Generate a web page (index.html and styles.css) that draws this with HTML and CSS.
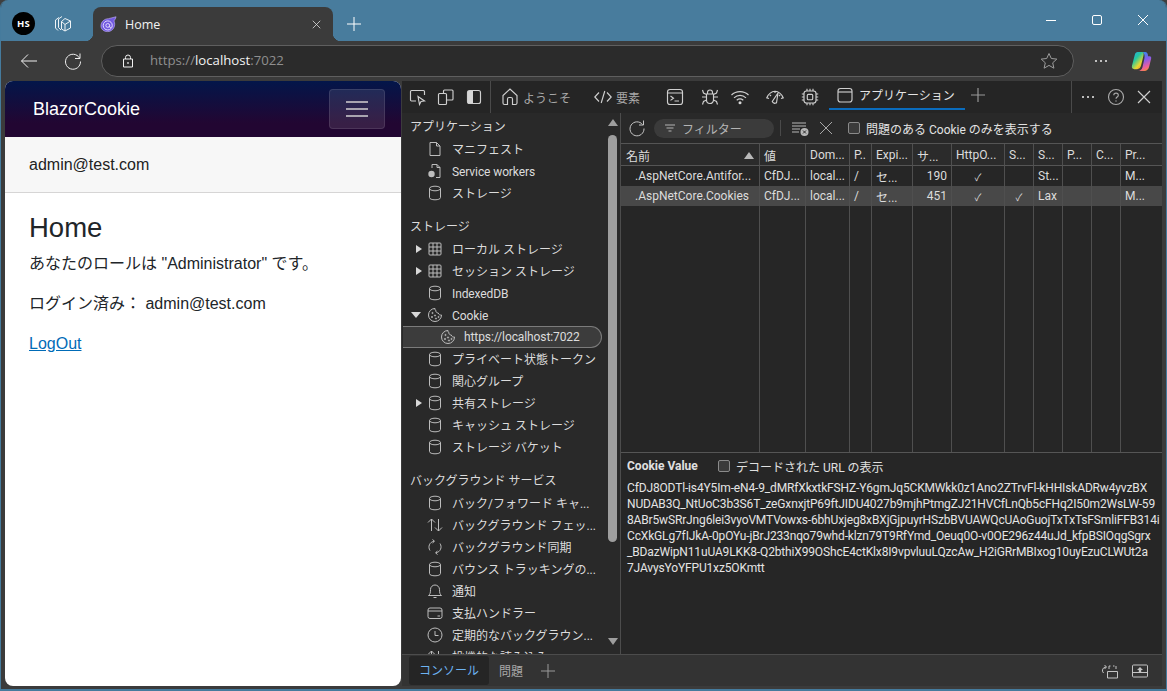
FILE: index.html
```html
<!DOCTYPE html>
<html lang="ja">
<head>
<meta charset="utf-8">
<title>Home</title>
<link rel="stylesheet" href="styles.css">
</head>
<body>
<svg class="defs" aria-hidden="true">
  <symbol id="db" viewBox="0 0 16 16"><ellipse cx="8" cy="3.5" rx="5.5" ry="2.3"/><path d="M2.500 3.500V12.500C2.500 14 5 14.800 8 14.800S13.500 14 13.500 12.500V3.500"/></symbol>
  <symbol id="file" viewBox="0 0 16 16"><path d="M3 1.500H9.500L13 5V14.500H3ZM9.500 1.500V5H13"/></symbol>
  <symbol id="grid" viewBox="0 0 16 16"><rect x="2" y="2" width="12" height="12" rx="1"/><path d="M2 6H14M2 10H14M6 2V14M10 2V14"/></symbol>
  <symbol id="cookie" viewBox="0 0 16 16"><path d="M8 1.500A6.500 6.500 0 1 0 14.500 8C13 8.300 11.500 7.500 11.300 6 9.800 6 8.500 4.800 8.800 3.200 8 3 7.800 2.300 8 1.500Z"/><circle cx="5.500" cy="6" r=".6"/><circle cx="5" cy="10" r=".6"/><circle cx="8" cy="8.500" r=".6"/><circle cx="9" cy="11.500" r=".6"/><circle cx="11.500" cy="10" r=".6"/></symbol>
</svg>
<div class="window">
  <header class="titlebar">
    <div class="avatar">HS</div>
    <svg class="ic18 coll" viewBox="0 0 18 18"><path d="M5 2.500 1.500 5V13L4 15.500M8 1.500 4.500 4V12.500L7 15M7.500 6.500 11 3.500 16.500 6V13L11 16 7.500 14ZM11 16V9.500L16.500 6M11 9.500 7.500 6.500"/></svg>
    <div class="tab">
      <svg class="favicon" viewBox="0 0 18 18"><path class="fav-fill" d="M1 10.500C1 6 4.500 3 9 2.800L17 .8C16.500 3 15.500 4.200 14.800 5.200 17 9.500 14.500 16.500 8 16.500 4 16.500 1 14 1 10.500Z"/><circle class="fav-ring" cx="8.200" cy="10" r="4.800"/><circle class="fav-ring" cx="8.200" cy="10" r="2"/><path class="fav-ring" d="M10.200 10V11.500C10.200 12.500 11.500 12.500 12 11.500"/></svg>
      <span class="tab-title">Home</span>
      <svg class="ic12 tab-x" viewBox="0 0 12 12"><path d="M1 1 11 11M11 1 1 11"/></svg>
    </div>
    <svg class="ic14 newtab" viewBox="0 0 14 14"><path d="M7 0V14M0 7H14"/></svg>
    <div class="winctl">
      <svg class="ic12" viewBox="0 0 12 12"><path d="M1 6.500H11"/></svg>
      <svg class="ic12" viewBox="0 0 12 12"><rect x="1.500" y="1.500" width="9" height="9" rx="1.500"/></svg>
      <svg class="ic12" viewBox="0 0 12 12"><path d="M1 1 11 11M11 1 1 11"/></svg>
    </div>
  </header>
  <div class="toolbar">
    <svg class="ic18 back" viewBox="0 0 18 18"><path d="M17 9H1.500M8 2.500 1.500 9 8 15.500"/></svg>
    <svg class="ic18 reload" viewBox="0 0 18 18"><path d="M15.500 6A7.500 7.500 0 1 0 16.500 9.500M16 1.500V6.500H11"/></svg>
    <div class="urlbar">
      <svg class="ic14 lock" viewBox="0 0 14 14"><path d="M4.500 5V3.500A2.500 2.500 0 0 1 9.500 3.500V5M2.500 5H11.500V13H2.500Z"/><circle class="solid" cx="7" cy="9" r=".9"/></svg>
      <span class="url"><span class="dim">https://</span>localhost<span class="dim">:7022</span></span>
      <svg class="ic18 star" viewBox="0 0 18 18"><path d="M9 1.500 11.300 6.500 16.800 7.100 12.700 10.800 13.900 16.200 9 13.400 4.100 16.200 5.300 10.800 1.200 7.100 6.700 6.500Z"/></svg>
    </div>
    <div class="dots wide"><i></i><i></i><i></i></div>
    <svg class="copilot" viewBox="0 0 22 22">
      <defs>
        <linearGradient id="cp1" x1="0" y1="0" x2="0.800" y2="1"><stop offset="0" stop-color="#2aa6ee"/><stop offset=".4" stop-color="#25c7a0"/><stop offset=".75" stop-color="#e8d72f"/><stop offset="1" stop-color="#f28b30"/></linearGradient>
        <linearGradient id="cp2" x1="0.300" y1="0" x2="0.600" y2="1"><stop offset="0" stop-color="#2f8cf0"/><stop offset=".45" stop-color="#8a5ce8"/><stop offset=".8" stop-color="#ee5f9a"/><stop offset="1" stop-color="#f58a3a"/></linearGradient>
      </defs>
      <path fill="url(#cp2)" d="M12 1H15C16.500 1 17.300 2 17.600 3.500L17.800 5.500H19.500C21 5.500 21.500 6.800 21 8.500L19 16.500C18.500 19 16.500 21 14 21H7.500C10 21 11.500 19 12 17L14 8C14.500 5.500 14.500 2.500 12 1Z"/>
      <path fill="url(#cp1)" d="M7 1H12C13.500 1.500 13.500 3 13 5L10.500 15.500C10 17.500 8.500 19 6.500 19H3.500C1.500 19 .5 17.500 1 15.500L4 4C4.500 2 5.500 1 7 1Z"/>
    </svg>
  </div>
  <main class="content">
    <section class="page">
      <div class="brandbar">
        <a class="brand">BlazorCookie</a>
        <button class="toggler"><i></i><i></i><i></i></button>
      </div>
      <div class="userbar">admin@test.com</div>
      <article class="article">
        <h1>Home</h1>
        <p>あなたのロールは "Administrator" です。</p>
        <p>ログイン済み： admin@test.com</p>
        <p><a class="link">LogOut</a></p>
      </article>
    </section>
    <section class="devtools">
      <div class="dt-tabs">
        <svg class="ic18 b28 first" viewBox="0 0 18 18"><path d="M7 13H2.500A1 1 0 0 1 1.500 12V3.500A1 1 0 0 1 2.500 2.500H14.500A1 1 0 0 1 15.500 3.500V7M9 8.500 10.500 16.500 12 13.500 15.500 13Z"/></svg>
        <svg class="ic18 b28" viewBox="0 0 18 18"><path d="M6.500 5V3A1 1 0 0 1 7.500 2H15A1 1 0 0 1 16 3V11A1 1 0 0 1 15 12H10M2.500 5.500H8.500A1 1 0 0 1 9.500 6.500V15.500A1 1 0 0 1 8.500 16.500H2.500A1 1 0 0 1 1.500 15.500V6.500A1 1 0 0 1 2.500 5.500Z"/></svg>
        <svg class="ic18 dock" viewBox="0 0 18 18"><rect x="2.500" y="2.500" width="13" height="13" rx="2"/><path class="solid" d="M3 3H8V15H3Z"/></svg>
        <span class="vsep"></span>
        <svg class="ic18 home" viewBox="0 0 18 18"><path d="M6.500 16.500H3.500A1.500 1.500 0 0 1 2 15V7.500L9 1 16 7.500V15A1.500 1.500 0 0 1 14.500 16.500H11.500V11A1.500 1.500 0 0 0 10 9.500H8A1.500 1.500 0 0 0 6.500 11Z"/></svg>
        <span class="dt-label welcome">ようこそ</span>
        <svg class="ic18 code" viewBox="0 0 18 18"><path d="M5 4.500 .8 9 5 13.500M13 4.500 17.200 9 13 13.500M10.800 3 7.200 15"/></svg>
        <span class="dt-label elements">要素</span>
        <svg class="ic18 t-console" viewBox="0 0 18 18"><rect x="1.500" y="1.500" width="15" height="15" rx="2.500"/><path d="M1.500 5H16.500M4.500 8 7.500 10.200 4.500 12.400M8.500 13H13"/></svg>
        <svg class="ic18 t-bug" viewBox="0 0 18 18"><path d="M5.500 6H12.500V12A3.500 3.500 0 0 1 5.500 12ZM6.500 6V4.500A2.500 2.500 0 0 1 11.500 4.500V6M5.500 9H1M12.500 9H17M5.500 6.500 2.500 5 1.500 2M12.500 6.500 15.500 5 16.500 2M5.500 12 2.500 13.500 1.500 16.500M12.500 12 15.500 13.500 16.500 16.500"/></svg>
        <svg class="ic18 t-wifi" viewBox="0 0 18 18"><path d="M.5 7C5 2.500 13 2.500 17.500 7M3 9.800C6.500 6.500 11.500 6.500 15 9.800M5.700 12.300C7.800 10.600 10.200 10.600 12.300 12.300"/><circle class="solid" cx="9" cy="14.800" r="1.500"/></svg>
        <svg class="ic18 t-perf" viewBox="0 0 18 18"><path d="M3 10.500 .8 9.800C2.500 6 5.500 3.500 9 3.300 12.500 3.500 15.500 6 17.200 9.800L15 10.500M3.800 6.800 5 8M9 3.300V5M14.200 6.800 13 8M7 14.500 6.300 13.500 12 5 10.500 14.800 8.500 15.300Z"/></svg>
        <svg class="ic18 t-cpu" viewBox="0 0 18 18"><rect x="3" y="3" width="12" height="12" rx="2.500"/><rect x="6.300" y="6.300" width="5.400" height="5.400" rx="1"/><path d="M6 .8V3M9 .8V3M12 .8V3M6 15V17.200M9 15V17.200M12 15V17.200M.8 6H3M.8 9H3M.8 12H3M15 6H17.200M15 9H17.200M15 12H17.200"/></svg>
        <div class="app-tab">
          <svg class="ic16" viewBox="0 0 16 16"><rect x="1" y="1.500" width="14" height="13.500" rx="2.500"/><path d="M1 5H15"/></svg>
          <span>アプリケーション</span>
        </div>
        <svg class="ic14 dt-plus" viewBox="0 0 14 14"><path d="M7 0V14M0 7H14"/></svg>
        <span class="vsep end"></span>
        <div class="dots dt-dots"><i></i><i></i><i></i></div>
        <svg class="ic18 help" viewBox="0 0 18 18"><circle cx="9" cy="9" r="7.500"/><path d="M6.800 7.200C6.800 4.500 11.300 4.500 11.300 7.200 11.300 9 9 9 9 10.800"/><circle class="solid" cx="9" cy="13" r=".7"/></svg>
        <svg class="ic14 dt-close" viewBox="0 0 14 14"><path d="M1 1 13 13M13 1 1 13"/></svg>
      </div>
      <div class="dt-body">
        <aside class="side">
          <nav class="tree">
            <div class="head">アプリケーション</div>
            <div class="row"><span class="car"></span><svg class="ti"><use href="#file"/></svg><span class="txt">マニフェスト</span></div>
            <div class="row small"><span class="car"></span><svg class="ti" viewBox="0 0 16 16"><path d="M5 5V1.500H10L13 4.500V14.500H9M10 1.500V4.500H13"/><circle class="solid" cx="4.500" cy="11" r="3.200"/></svg><span class="txt">Service workers</span></div>
            <div class="row"><span class="car"></span><svg class="ti"><use href="#db"/></svg><span class="txt">ストレージ</span></div>
            <div class="head gap">ストレージ</div>
            <div class="row"><span class="car right"></span><svg class="ti"><use href="#grid"/></svg><span class="txt">ローカル ストレージ</span></div>
            <div class="row"><span class="car right"></span><svg class="ti"><use href="#grid"/></svg><span class="txt">セッション ストレージ</span></div>
            <div class="row small"><span class="car"></span><svg class="ti"><use href="#db"/></svg><span class="txt">IndexedDB</span></div>
            <div class="row small"><span class="car down"></span><svg class="ti"><use href="#cookie"/></svg><span class="txt">Cookie</span></div>
            <div class="row selected small"><svg class="ti"><use href="#cookie"/></svg><span class="txt">https://localhost:7022</span></div>
            <div class="row"><span class="car"></span><svg class="ti"><use href="#db"/></svg><span class="txt">プライベート状態トークン</span></div>
            <div class="row"><span class="car"></span><svg class="ti"><use href="#db"/></svg><span class="txt">関心グループ</span></div>
            <div class="row"><span class="car right"></span><svg class="ti"><use href="#db"/></svg><span class="txt">共有ストレージ</span></div>
            <div class="row"><span class="car"></span><svg class="ti"><use href="#db"/></svg><span class="txt">キャッシュ ストレージ</span></div>
            <div class="row"><span class="car"></span><svg class="ti"><use href="#db"/></svg><span class="txt">ストレージ バケット</span></div>
            <div class="head gap">バックグラウンド サービス</div>
            <div class="row"><span class="car"></span><svg class="ti"><use href="#db"/></svg><span class="txt">バック/フォワード キャ...</span></div>
            <div class="row"><span class="car"></span><svg class="ti" viewBox="0 0 16 16"><path d="M4.500 14V2M1 5.500 4.500 2 8 5.500M11.500 2V14M8 10.500 11.500 14 15 10.500"/></svg><span class="txt">バックグラウンド フェッ...</span></div>
            <div class="row"><span class="car"></span><svg class="ti" viewBox="0 0 16 16"><path d="M3 11.500A6 6 0 0 1 7 2.200M5.500 .5 7.500 2.200 5.500 4M13 4.500A6 6 0 0 1 9 13.800M10.500 12 8.500 13.800 10.500 15.500"/></svg><span class="txt">バックグラウンド同期</span></div>
            <div class="row"><span class="car"></span><svg class="ti"><use href="#db"/></svg><span class="txt">バウンス トラッキングの...</span></div>
            <div class="row"><span class="car"></span><svg class="ti" viewBox="0 0 16 16"><path d="M1.500 12.500C3 11.500 3.500 10 3.500 6.500A4.500 4.500 0 0 1 12.500 6.500C12.500 10 13 11.500 14.500 12.500ZM6.500 14.500H9.500"/></svg><span class="txt">通知</span></div>
            <div class="row"><span class="car"></span><svg class="ti" viewBox="0 0 16 16"><rect x="1" y="3" width="14" height="10.500" rx="2"/><path d="M1 6H15M10.500 11H13"/></svg><span class="txt">支払ハンドラー</span></div>
            <div class="row"><span class="car"></span><svg class="ti" viewBox="0 0 16 16"><circle cx="8" cy="8" r="7"/><path d="M8 4V8.500H11.500"/></svg><span class="txt">定期的なバックグラウン...</span></div>
            <div class="row"><span class="car"></span><svg class="ti" viewBox="0 0 16 16"><path d="M4.500 14V2M1 5.500 4.500 2 8 5.500M11.500 2V14M8 10.500 11.500 14 15 10.500"/></svg><span class="txt">投機的な読み込み</span></div>
          </nav>
          <div class="scroll">
            <span class="arrow up"></span>
            <span class="thumb"></span>
            <span class="arrow dn"></span>
          </div>
        </aside>
        <div class="main">
          <div class="filterbar">
            <svg class="ic16 fb-reload" viewBox="0 0 16 16"><path d="M13.500 4.500A7 7 0 1 0 15 8.500M14.500 .5V5H10"/></svg>
            <div class="pill">
              <svg class="ic12" viewBox="0 0 12 12"><path d="M1 3H11M2.500 6H9.500M4.500 9H7.500"/></svg>
              <span>フィルター</span>
            </div>
            <span class="vsep short"></span>
            <svg class="ic18 fb-clear" viewBox="0 0 18 18"><path d="M1 4H15M1 7H15M1 10H9M1 13H8"/><circle class="solid" cx="13.500" cy="13" r="4"/><path class="cut" d="M12 11.500 15 14.500M15 11.500 12 14.500"/></svg>
            <svg class="ic14 fb-x" viewBox="0 0 14 14"><path d="M1 1 13 13M13 1 1 13"/></svg>
            <span class="check"></span>
            <span class="fb-text">問題のある Cookie のみを表示する</span>
          </div>
          <div class="tablewrap">
            <table class="cookies">
              <colgroup>
                <col class="w138"><col class="w46"><col class="w44"><col class="w22"><col class="w41"><col class="w39"><col class="w53"><col class="w29"><col class="w29"><col class="w29"><col class="w29"><col>
              </colgroup>
              <thead>
                <tr>
                  <th>名前<span class="sort"></span></th><th>値</th><th>Dom...</th><th>P..</th><th>Expi...</th><th>サ...</th><th>HttpO...</th><th>S...</th><th>S...</th><th>P...</th><th>C...</th><th>Pr...</th>
                </tr>
              </thead>
              <tbody>
                <tr>
                  <td class="name">.AspNetCore.Antifor...</td><td>CfDJ...</td><td>local...</td><td>/</td><td>セ...</td><td class="num">190</td><td class="ctr">✓</td><td></td><td>St...</td><td></td><td></td><td>M...</td>
                </tr>
                <tr class="sel">
                  <td class="name">.AspNetCore.Cookies</td><td>CfDJ...</td><td>local...</td><td>/</td><td>セ...</td><td class="num">451</td><td class="ctr">✓</td><td class="ctr">✓</td><td>Lax</td><td></td><td></td><td>M...</td>
                </tr>
                <tr class="filler"><td></td><td></td><td></td><td></td><td></td><td></td><td></td><td></td><td></td><td></td><td></td><td></td></tr>
              </tbody>
            </table>
          </div>
          <div class="valuepane">
            <div class="value-head"><strong>Cookie Value</strong><span class="check"></span><span>デコードされた URL の表示</span></div>
            <div class="value">CfDJ8ODTl-is4Y5Im-eN4-9_dMRfXkxtkFSHZ-Y6gmJq5CKMWkk0z1Ano2ZTrvFl-kHHIskADRw4yvzBX<br>NUDAB3Q_NtUoC3b3S6T_zeGxnxjtP69ftJIDU4027b9mjhPtmgZJ21HVCfLnQb5cFHq2I50m2WsLW-59<br>8ABr5wSRrJng6lei3vyoVMTVowxs-6bhUxjeg8xBXjGjpuyrHSzbBVUAWQcUAoGuojTxTxTsFSmliFFB314i<br>CcXkGLg7fIJkA-0pOYu-jBrJ233nqo79whd-klzn79T9RfYmd_Oeuq0O-v0OE296z44uJd_kfpBSIOqgSgrx<br>_BDazWipN11uUA9LKK8-Q2bthiX99OShcE4ctKlx8I9vpvluuLQzcAw_H2iGRrMBIxog10uyEzuCLWUt2a<br>7JAvysYoYFPU1xz5OKmtt</div>
          </div>
        </div>
      </div>
      <div class="drawer">
        <div class="dr-tab">コンソール</div>
        <div class="dr-label">問題</div>
        <svg class="ic14 dr-plus" viewBox="0 0 14 14"><path d="M7 0V14M0 7H14"/></svg>
        <svg class="ic18 dr-a" viewBox="0 0 18 18"><path d="M2.500 11A3.500 3.500 0 0 1 5 5M3.500 3 5.500 5 3.500 7M6.500 9.500H16.500V16H6.500ZM8 7V4H9.500M12 4H13.500M15 4V7"/></svg>
        <svg class="ic18 dr-b" viewBox="0 0 18 18"><rect x="1.500" y="3" width="15" height="12" rx="1"/><path d="M1.500 10.500H16.500"/><path class="solid" d="M9 5 12 8H10.200V10.500H7.800V8H6Z"/></svg>
      </div>
    </section>
  </main>
</div>
</body>
</html>
```
FILE: styles.css
```css
* { box-sizing: border-box; }
html, body { margin: 0; height: 100%; overflow: hidden; }
body { background: #3f3f3f; font-family: "Roboto", "Noto Sans CJK JP", sans-serif; }
.defs { display: none; }
svg { flex: none; fill: none; stroke: #d6d6d6; stroke-width: 1; overflow: visible; }
svg .solid { fill: #d6d6d6; stroke: none; }
.ic12 { width: 12px; height: 12px; }
.ic14 { width: 14px; height: 14px; }
.ic16 { width: 16px; height: 16px; }
.ic18 { width: 18px; height: 18px; }

.window { height: 691px; display: flex; flex-direction: column; border: solid #457b9d; border-width: 0 1px 2px; border-radius: 8px 8px 0 0; overflow: hidden; background: #3b3b3b; }

.titlebar { height: 41px; flex: none; display: flex; align-items: flex-end; background: #487c9d; color: #fff; }
.avatar { width: 23px; height: 23px; margin: 0 0 6px 11px; border-radius: 50%; background: #000; font: 700 9.5px/23px "Open Sans", sans-serif; text-align: center; letter-spacing: .3px; }
.coll { margin: 0 0 8px 19px; stroke: #eef3f6; }
.tab { width: 240px; height: 34px; margin-left: 21px; display: flex; align-items: center; padding: 0 10px 0 7px; background: #3b3b3b; border-radius: 8px 8px 0 0; position: relative; }
.tab::before, .tab::after { content: ""; position: absolute; bottom: 0; width: 8px; height: 8px; }
.tab::before { left: -8px; background: radial-gradient(circle at 0 0, transparent 8px, #3b3b3b 8.5px); }
.tab::after { right: -8px; background: radial-gradient(circle at 100% 0, transparent 8px, #3b3b3b 8.5px); }
.favicon { width: 17px; height: 17px; stroke: none; }
.fav-fill { fill: #7159e0; stroke: #c9b8ff; stroke-width: .6; }
.fav-ring { stroke: #e8e0ff; stroke-width: 1; fill: none; }
.tab-title { margin-left: 8px; flex: 1; font: 12.5px "Open Sans", sans-serif; color: #f2f2f2; }
.tab-x { stroke: #e8e8e8; width: 9px; height: 9px; margin-right: 2px; }
.newtab { margin: 0 0 10px 14px; stroke: #fff; }
.winctl { margin-left: auto; margin-right: 17px; height: 41px; display: flex; align-items: center; gap: 34px; }
.winctl svg { stroke: #fff; margin-bottom: 1px; }

.toolbar { height: 40px; flex: none; display: flex; align-items: center; background: #3b3b3b; }
.back { margin-left: 19px; stroke: #f0f0f0; }
.reload { margin-left: 26px; stroke: #f0f0f0; }
.urlbar { width: 973px; height: 32px; margin-left: 19px; display: flex; align-items: center; padding: 0 15px 0 19px; border: 1px solid #5f5f5f; border-radius: 16px; background: #2b2b2b; }
.lock { stroke: #f0f0f0; }
.url { margin-left: 15px; flex: 1; font: 13.2px/1 "Open Sans", sans-serif; color: #f2f2f2; }
.dim { color: #8f8f8f; }
.star { stroke: #9d9d9d; }
.dots { display: flex; gap: 3px; }
.dots i { width: 2px; height: 2px; background: #eee; border-radius: 50%; }
.wide { margin-left: 21px; }
.copilot { width: 21px; height: 21px; margin-left: 24px; stroke: none; }

.content { flex: 1; min-height: 0; display: flex; padding: 0 4px 3px; }
.page { width: 396px; flex: none; background: #fff; border-radius: 8px; overflow: hidden; font-family: "Liberation Sans", "Noto Sans CJK JP", sans-serif; color: #212529; font-size: 16px; }
.brandbar { height: 56px; display: flex; align-items: center; justify-content: space-between; padding: 0 16px 0 28px; background: linear-gradient(180deg, #03164a 0%, #220632 75%); }
.brand { color: #fff; font-size: 18px; }
.toggler { width: 56px; height: 40px; padding: 0; display: flex; flex-direction: column; align-items: center; justify-content: center; gap: 5px; background: rgba(255,255,255,.1); border: 1px solid rgba(255,255,255,.1); border-radius: 4px; }
.toggler i { width: 22px; height: 2px; background: #a9a4b0; }
.userbar { height: 56px; display: flex; align-items: center; padding-left: 24px; background: #f7f7f7; border-bottom: 1px solid #d6d5d5; color: #222; }
.article { padding: 18px 24px 0; }
h1 { margin: 0 0 8px; font-size: 27.5px; font-weight: 400; line-height: 33px; }
p { margin: 0 0 16px; line-height: 24px; }
.link { color: #006bb7; text-decoration: underline; }

.devtools { flex: 1; min-width: 0; margin-left: 1px; display: flex; flex-direction: column; background: #292929; color: #dcdcdc; font-size: 12px; }
.dt-tabs { height: 32px; flex: none; display: flex; align-items: center; background: #252525; }
.dt-tabs svg { stroke: #cfcfcf; stroke-width: 1.15; }
.b28 { margin-right: 10px; }
.first { margin-left: 7px; }
.dock { margin-right: 7px; }
.vsep { width: 1px; height: 32px; background: #4a4a4a; flex: none; }
.home { margin-left: 10px; }
.dt-label { color: #a8a8a8; }
.welcome { margin-left: 4px; }
.code { margin-left: 23px; }
.elements { margin-left: 4px; }
.t-console { margin-left: 26px; }
.t-bug { margin-left: 17px; }
.t-wifi { margin-left: 12px; }
.t-perf { margin-left: 17px; }
.t-cpu { margin-left: 17px; }
.app-tab { width: 136px; height: 29px; margin-left: 10px; padding-left: 8px; align-self: flex-start; display: flex; align-items: center; gap: 6px; color: #e4e4e4; border-bottom: 2px solid #0a6cbd; }
.dt-plus { margin: 0 0 4px 6px; stroke: #9a9a9a !important; }
.vsep.end { margin-left: 86px; }
.dt-dots { margin-left: 10px; }
.help { margin-left: 13px; stroke: #a8a8a8 !important; }
.help .solid { fill: #a8a8a8; }
.dt-close { margin-left: 12px; }

.dt-body { flex: 1; min-height: 0; display: flex; }
.side { width: 219px; flex: none; display: flex; border-right: 1px solid #4c4c4c; }
.tree { flex: 1; min-width: 0; padding-top: 3px; overflow: hidden; }
.head { height: 22px; line-height: 22px; padding-left: 8px; }
.head.gap { margin-top: 12px; }
.row { height: 22px; display: flex; align-items: center; white-space: nowrap; overflow: hidden; }
.txt { margin-bottom: 2px; }
.row.small .txt { letter-spacing: -.1px; margin-bottom: 0; margin-top: 2px; }
.car { width: 12px; height: 10px; margin-left: 10px; flex: none; }
.car.right { border-left: 6px solid #d8d8d8; border-top: 4px solid transparent; border-bottom: 4px solid transparent; width: 0; height: 0; margin-left: 14px; margin-right: 2px; }
.car.down { border-top: 6px solid #d8d8d8; border-left: 5px solid transparent; border-right: 5px solid transparent; width: 0; height: 0; margin-left: 9px; margin-right: 3px; }
.ti { width: 16px; height: 16px; margin: 0 9px 0 3px; stroke: #bdbdbd; }
.ti .solid { fill: #bdbdbd; }
.row.selected { width: 199px; margin-left: 1px; padding-left: 37px; background: #3c3c3c; border: 1px solid #7b7b7b; border-left: 0; border-radius: 0 11px 11px 0; }
.row.selected .ti { margin: 0 8px 0 0; }
.row.selected .txt { margin-top: 0; }
.scroll { width: 15px; flex: none; display: flex; flex-direction: column; align-items: center; padding-top: 6px; overflow: hidden; }
.arrow { width: 0; height: 0; flex: none; border-left: 5px solid transparent; border-right: 5px solid transparent; }
.arrow.up { border-bottom: 7px solid #9e9e9e; }
.arrow.dn { border-top: 7px solid #9e9e9e; margin-top: 96px; }
.thumb { width: 9px; height: 407px; margin-top: 9px; background: #9e9e9e; border-radius: 5px; flex: none; }

.main { flex: 1; min-width: 0; display: flex; flex-direction: column; }
.filterbar { height: 30px; flex: none; display: flex; align-items: center; background: #292929; }
.fb-reload { margin-left: 8px; stroke: #c8c8c8; }
.pill { width: 120px; height: 19px; margin-left: 9px; display: flex; align-items: center; gap: 6px; padding-left: 10px; background: #3b3b3b; border-radius: 10px; color: #b4b4b4; }
.pill svg { stroke: #b4b4b4; }
.vsep.short { height: 16px; margin-left: 6px; }
.fb-clear { margin-left: 10px; stroke: #b8b8b8; }
.fb-clear .solid { fill: #b8b8b8; }
.fb-clear .cut { stroke: #292929; }
.fb-x { margin-left: 10px; stroke: #a8a8a8; }
.check { width: 12px; height: 12px; flex: none; background: #3b3b3b; border: 1px solid #8a8a8a; border-radius: 2px; }
.filterbar .check { margin-left: 15px; }
.fb-text { margin-left: 6px; color: #e2e2e2; white-space: nowrap; }

.tablewrap { height: 310px; flex: none; border-top: 1px solid #555; border-bottom: 1px solid #555; background: #262626; }
.cookies { width: 100%; height: 100%; table-layout: fixed; border-collapse: separate; border-spacing: 0; font-size: 12px; }
.w138 { width: 139px; } .w46 { width: 46px; } .w44 { width: 44px; } .w22 { width: 22px; } .w41 { width: 41px; } .w39 { width: 39px; } .w53 { width: 53px; } .w29 { width: 29px; }
.cookies th, .cookies td { padding: 0 4px; border-right: 1px solid #4f4f4f; white-space: nowrap; overflow: hidden; text-align: left; font-weight: 400; color: #dcdcdc; }
.cookies th:last-child, .cookies td:last-child { border-right: 0; }
.cookies th { height: 22px; padding-top: 1px; background: #2b2b2b; border-bottom: 1px solid #555; }
.cookies th:first-child { position: relative; padding-left: 5px; }
.cookies td { height: 20px; }
.cookies td.name { padding-left: 14px; }
.cookies td.num { text-align: right; }
.cookies td.ctr { text-align: center; font-size: 10px; }
.sel td { background: #484848; }
.cookies .filler td { height: auto; }
.sort { position: absolute; right: 5px; top: 8px; border-left: 5px solid transparent; border-right: 5px solid transparent; border-bottom: 7px solid #b8b8b8; }

.valuepane { flex: 1; min-height: 0; padding: 4px 6px; background: #262626; overflow: hidden; }
.value-head { height: 18px; display: flex; align-items: center; gap: 6px; white-space: nowrap; color: #e0e0e0; }
.value-head strong { width: 85px; font-size: 12px; }
.value { margin-top: 5px; font-size: 12px; line-height: 16px; letter-spacing: -.15px; white-space: nowrap; color: #e4e4e4; }

.drawer { height: 32px; flex: none; display: flex; align-items: center; background: #333; border-top: 1px solid #4c4c4c; padding-left: 7px; }
.dr-tab { width: 80px; height: 29px; padding-top: 2px; line-height: 27px; text-align: center; background: #252525; border-radius: 3px; color: #6db3f2; }
.dr-label { margin-left: 10px; color: #a8a8a8; }
.dr-plus { margin-left: 18px; stroke: #9a9a9a; }
.dr-a { margin-left: auto; stroke: #c4c4c4; }
.dr-b { margin: 0 13px 0 12px; stroke: #c4c4c4; }
.dr-b .solid { fill: #c4c4c4; }
```
